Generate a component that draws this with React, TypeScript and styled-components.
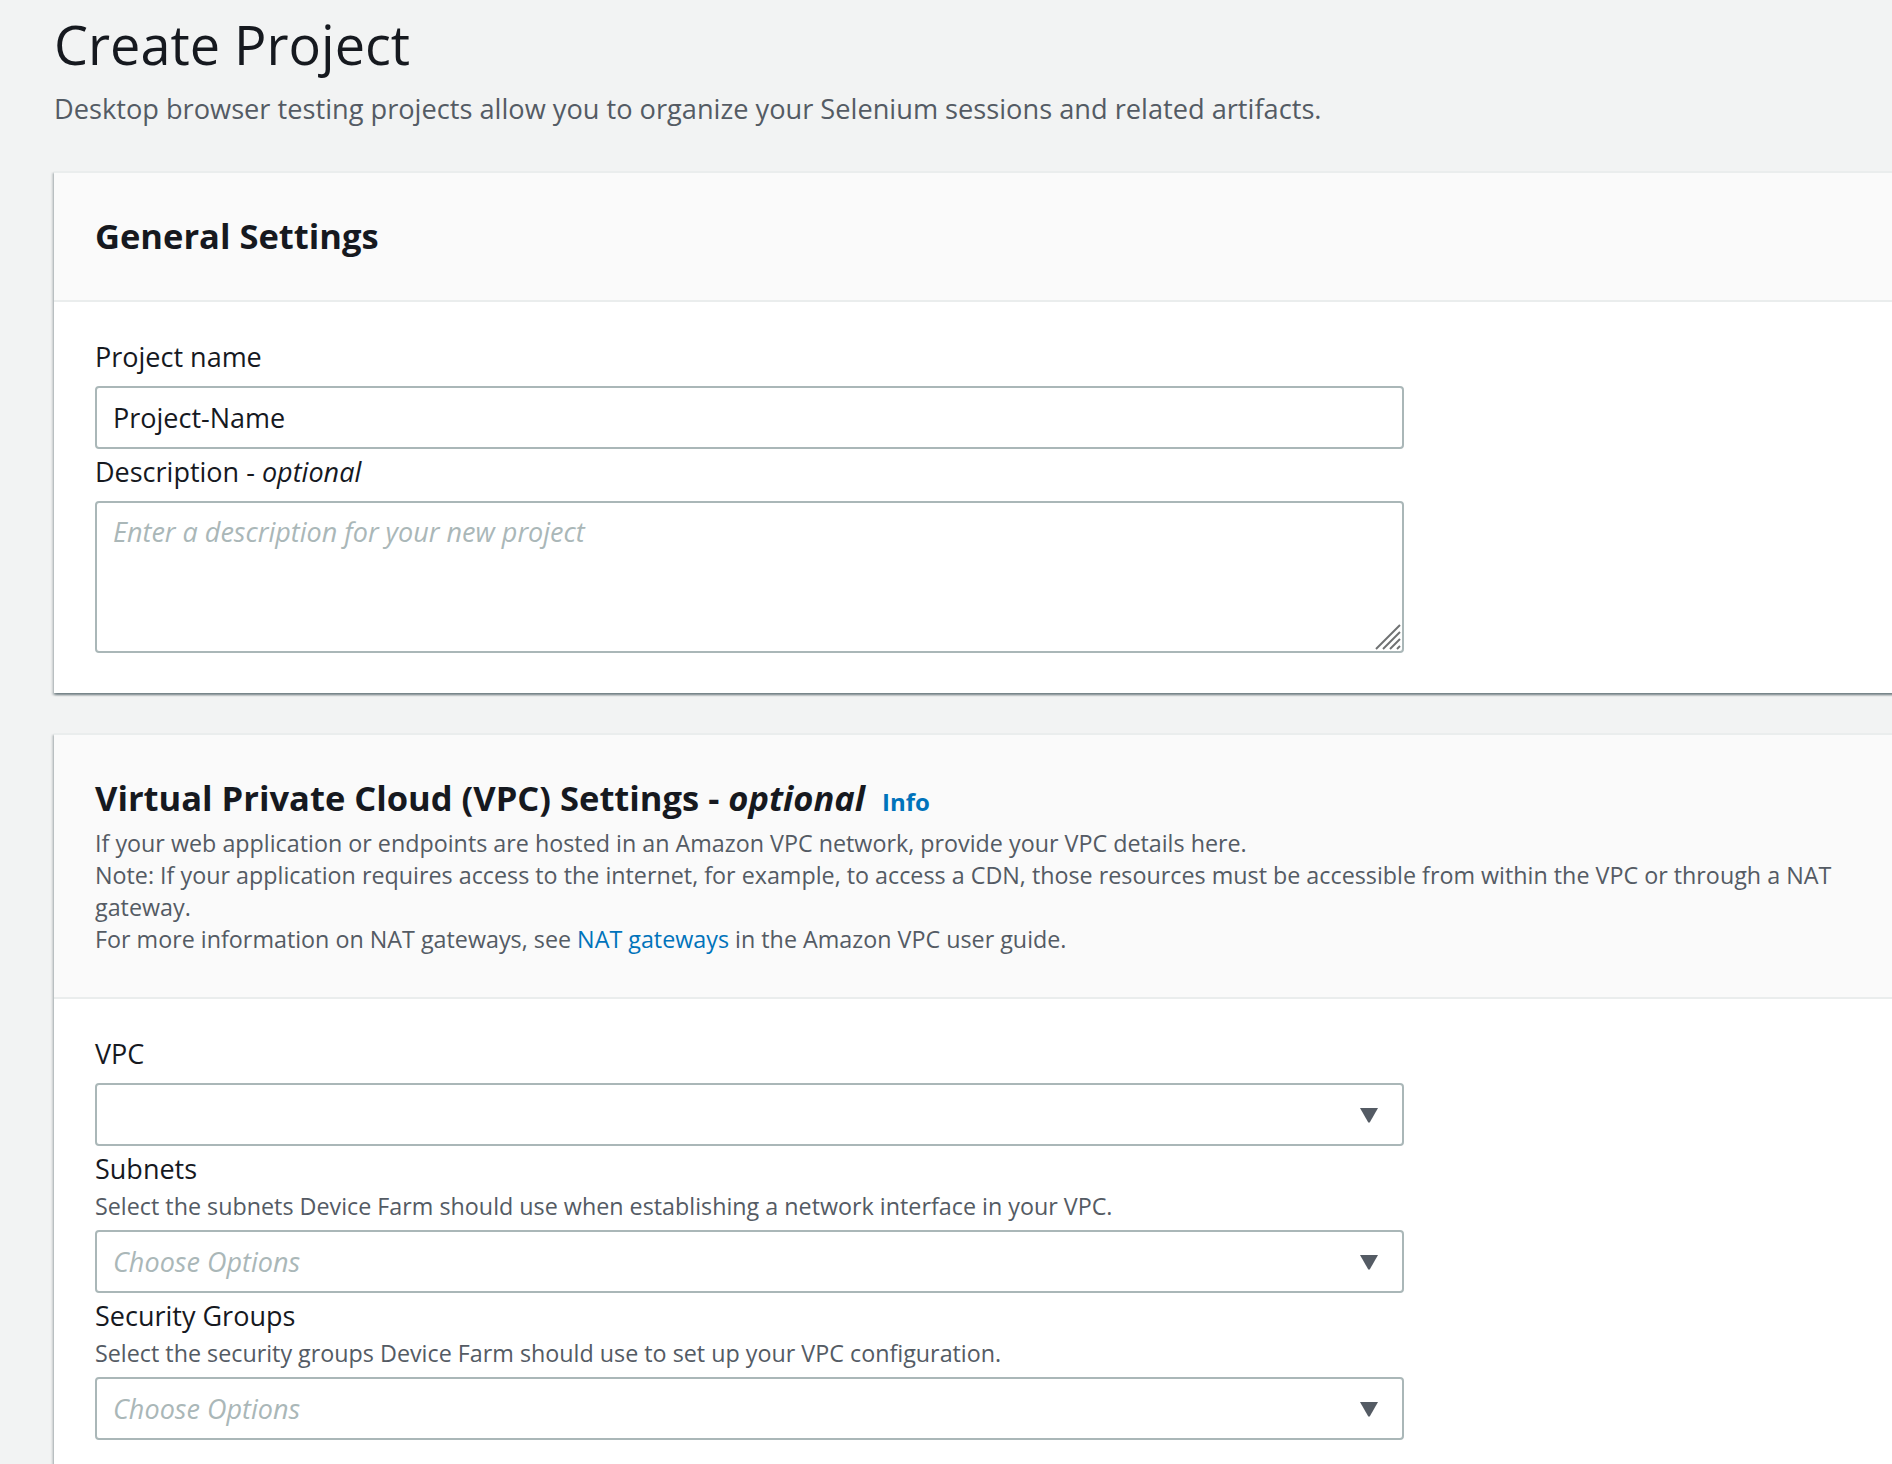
import { createGlobalStyle } from "styled-components"
import styled from "styled-components"

const GlobalStyle = createGlobalStyle`
  html, body {
    margin: 0;
    padding: 0;
    overflow: hidden;
    background-color: #f2f3f3;
  }
  * {
    box-sizing: border-box;
  }
`

// Page
const Page = styled.div`
  padding: 12px 0 0 54px;
  font-family: "Open Sans", "Noto Sans", sans-serif;
  color: #16191f;
`

const Title = styled.h1`
  margin: 0;
  font-size: 54px;
  line-height: 64px;
  font-weight: 400;
  color: #16191f;
`

const Subtitle = styled.p`
  margin: 17px 0 0;
  font-size: 27.2px;
  line-height: 32px;
  color: #545b64;
`

// Cards
const Card = styled.section`
  margin: 46px -20px 40px 0;
  background-color: #ffffff;
  border-top: 2px solid #eaeded;
  box-shadow: 0 2px 2px 0 rgba(0, 28, 36, 0.35), 2px 2px 2px 0 rgba(0, 28, 36, 0.15),
    -2px 2px 2px 0 rgba(0, 28, 36, 0.15);

  & + & {
    margin-top: 0;
  }
`

const CardHeader = styled.header`
  padding: 41px 41px 42px;
  background-color: #fafafa;
  border-bottom: 2px solid #eaeded;
`

const HeadingRow = styled.div`
  display: flex;
  align-items: baseline;
  gap: 17px;
`

const Heading = styled.h2`
  margin: 0;
  font-size: 34.5px;
  line-height: 44px;
  font-weight: 700;
  color: #16191f;

  em {
    font-weight: 700;
  }
`

const InfoLink = styled.a`
  font-size: 24px;
  font-weight: 700;
  color: #0073bb;
  text-decoration: none;
`

const HeaderText = styled.p`
  margin: 7px 0 0;
  font-size: 23.3px;
  line-height: 32px;
  color: #545b64;
`

const TextLink = styled.a`
  color: #0073bb;
  text-decoration: none;
`

const CardBody = styled.div`
  padding: 37px 41px 40px;
`

// Form fields
const Field = styled.div`
  display: flex;
  flex-direction: column;
  width: 1309px;

  & + & {
    margin-top: 5px;
  }
`

const Label = styled.label`
  font-size: 27px;
  line-height: 36px;
  color: #16191f;

  em {
    font-style: italic;
  }
`

const Hint = styled.span`
  margin-top: 6px;
  font-size: 23.3px;
  line-height: 26px;
  color: #545b64;
`

const inputBase = `
  width: 100%;
  margin-top: 11px;
  border: 2px solid #aab7b8;
  border-radius: 4px;
  background-color: #ffffff;
  font-family: "Open Sans", "Noto Sans", sans-serif;
  font-size: 27px;
  color: #16191f;
  outline: none;
`

const TextInput = styled.input`
  ${inputBase}
  height: 63px;
  padding: 0 16px;
`

const AreaWrap = styled.div`
  position: relative;
  margin-top: 11px;
`

const TextArea = styled.textarea`
  ${inputBase}
  display: block;
  margin-top: 0;
  height: 152px;
  padding: 11px 16px;
  line-height: 36px;
  resize: none;

  &::placeholder {
    color: #aab7b8;
    font-style: italic;
  }
`

const ResizeGrip = styled.svg`
  position: absolute;
  right: 3px;
  bottom: 3px;
`

const SelectBox = styled.div`
  ${inputBase}
  height: 63px;
  padding: 0 23px 0 16px;
  display: flex;
  align-items: center;
  justify-content: space-between;
`

const SelectValue = styled.span<{ $placeholder?: boolean }>`
  font-style: ${(p) => (p.$placeholder ? "italic" : "normal")};
  color: ${(p) => (p.$placeholder ? "#aab7b8" : "#16191f")};
`

function Caret() {
  return (
    <svg width="20" height="16" viewBox="0 0 20 16">
      <path d="M1 1 L19 1 L11 15 Q10 16.5 9 15 Z" fill="#545b64" />
    </svg>
  )
}

function Select({ placeholder }: { placeholder?: string }) {
  return (
    <SelectBox>
      <SelectValue $placeholder={!!placeholder}>{placeholder}</SelectValue>
      <Caret />
    </SelectBox>
  )
}

export default function App() {
  return (
    <>
      <GlobalStyle />
      <Page>
        <Title>Create Project</Title>
        <Subtitle>
          Desktop browser testing projects allow you to organize your Selenium sessions and related artifacts.
        </Subtitle>

        {/* General settings */}
        <Card>
          <CardHeader>
            <Heading>General Settings</Heading>
          </CardHeader>
          <CardBody>
            <Field>
              <Label>Project name</Label>
              <TextInput defaultValue="Project-Name" />
            </Field>
            <Field>
              <Label>
                Description - <em>optional</em>
              </Label>
              <AreaWrap>
                <TextArea placeholder="Enter a description for your new project" />
                <ResizeGrip width="26" height="26" viewBox="0 0 26 26">
                  <g stroke="#6f7172" strokeWidth="2">
                    <line x1="1" y1="25" x2="25" y2="1" />
                    <line x1="8" y1="25" x2="25" y2="8" />
                    <line x1="15" y1="25" x2="25" y2="15" />
                    <line x1="22" y1="25" x2="25" y2="22" />
                  </g>
                </ResizeGrip>
              </AreaWrap>
            </Field>
          </CardBody>
        </Card>

        {/* VPC settings */}
        <Card>
          <CardHeader>
            <HeadingRow>
              <Heading>
                Virtual Private Cloud (VPC) Settings - <em>optional</em>
              </Heading>
              <InfoLink href="#">Info</InfoLink>
            </HeadingRow>
            <HeaderText>
              If your web application or endpoints are hosted in an Amazon VPC network, provide your VPC details here.
              <br />
              Note: If your application requires access to the internet, for example, to access a CDN, those resources
              must be accessible from within the VPC or through a NAT gateway.
              <br />
              For more information on NAT gateways, see <TextLink href="#">NAT gateways</TextLink> in the Amazon VPC
              user guide.
            </HeaderText>
          </CardHeader>
          <CardBody>
            <Field>
              <Label>VPC</Label>
              <Select />
            </Field>
            <Field>
              <Label>Subnets</Label>
              <Hint>Select the subnets Device Farm should use when establishing a network interface in your VPC.</Hint>
              <Select placeholder="Choose Options" />
            </Field>
            <Field>
              <Label>Security Groups</Label>
              <Hint>Select the security groups Device Farm should use to set up your VPC configuration.</Hint>
              <Select placeholder="Choose Options" />
            </Field>
          </CardBody>
        </Card>
      </Page>
    </>
  )
}
